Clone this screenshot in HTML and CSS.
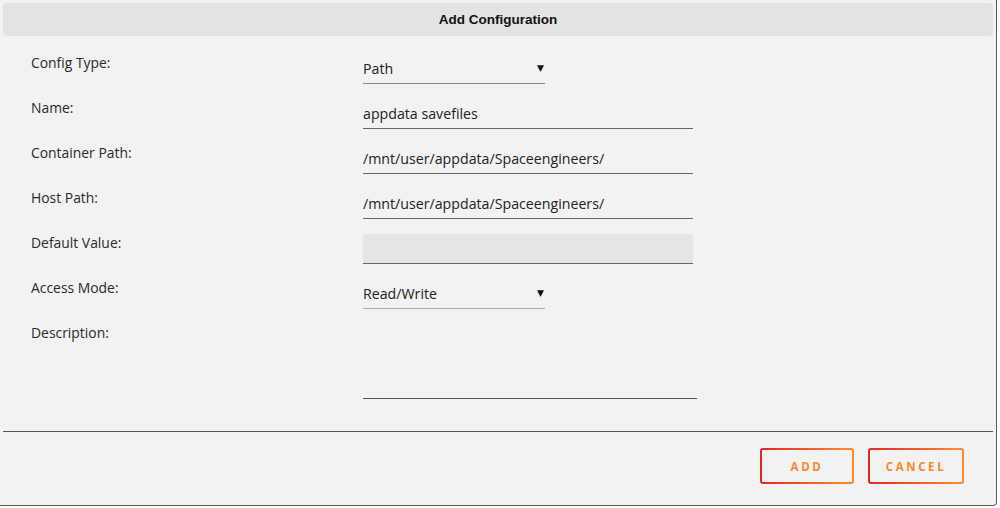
FILE: index.html
```html
<!DOCTYPE html>
<html lang="en">
<head>
    <meta charset="UTF-8">
    <title>Add Configuration</title>
    <link rel="stylesheet" href="styles.css">
</head>
<body>
    <div class="dialog">
        <div class="dialog-header">Add Configuration</div>

        <form class="config-form">
            <label class="field-label">Config Type:</label>
            <div class="select-wrap">
                <div class="field select">Path</div>
            </div>

            <label class="field-label">Name:</label>
            <div class="field text">appdata savefiles</div>

            <label class="field-label">Container Path:</label>
            <div class="field text">/mnt/user/appdata/Spaceengineers/</div>

            <label class="field-label">Host Path:</label>
            <div class="field text">/mnt/user/appdata/Spaceengineers/</div>

            <label class="field-label">Default Value:</label>
            <div class="field text disabled"></div>

            <label class="field-label">Access Mode:</label>
            <div class="select-wrap">
                <div class="field select light">Read/Write</div>
            </div>

            <label class="field-label">Description:</label>
            <div class="field textarea"></div>
        </form>

        <div class="dialog-footer">
            <button type="button" class="action-button">Add</button>
            <button type="button" class="action-button">Cancel</button>
        </div>
    </div>
</body>
</html>
```

FILE: styles.css
```css
* {
    margin: 0;
    padding: 0;
    box-sizing: border-box;
}

body {
    background: white;
    font-family: 'Open Sans', sans-serif;
    color: #222;
    height: 508px;
    overflow: hidden;
}

.dialog {
    width: 997px;
    height: 506px;
    padding: 3px 3px 0 3px;
    background: #f2f2f2;
    border-right: 1px solid #5a5a5a;
    border-bottom: 1px solid #5a5a5a;
    border-bottom-right-radius: 4px;
}

.dialog-header {
    height: 33px;
    background: #e3e3e3;
    border-radius: 4px;
    text-align: center;
    line-height: 34px;
    font-family: 'Liberation Sans', sans-serif;
    font-weight: 700;
    font-size: 13.5px;
    color: #111;
}

.config-form {
    display: grid;
    grid-template-columns: 332px 334px;
    grid-template-rows: repeat(6, 45px) auto;
    padding: 17px 0 0 28px;
}

.field-label {
    font-size: 13.9px;
    line-height: 20px;
    color: #2a2a2a;
}

.field {
    margin-top: 1px;
    height: 30px;
    font-size: 14.2px;
    line-height: 29px;
    border-bottom: 1px solid #666;
}

.field.text {
    width: 330px;
}

.field.disabled {
    background: #e6e6e6;
}

.select-wrap {
    position: relative;
    width: 182px;
}

.field.select {
    border-bottom-color: #888;
}

.field.select.light {
    border-bottom-color: #a8a8a8;
}

.select-wrap::after {
    content: "\25BC";
    position: absolute;
    right: 1px;
    top: 10px;
    font-family: 'DejaVu Sans', sans-serif;
    font-size: 9px;
    color: #111;
}

.field.textarea {
    width: 334px;
    height: 75px;
    border-bottom: 1px solid #555;
}

.dialog-footer {
    margin-top: 32px;
    border-top: 1px solid #555;
    display: flex;
    justify-content: flex-end;
    gap: 14px;
    padding: 16px 29px 0 0;
}

.action-button {
    height: 36px;
    width: 94px;
    border: 2px solid transparent;
    border-radius: 3px;
    background: linear-gradient(#f2f2f2, #f2f2f2) padding-box,
                linear-gradient(90deg, #e3262a, #ff8c2a) border-box;
    color: #f98a2c;
    font-family: 'Open Sans', sans-serif;
    font-size: 11.5px;
    font-weight: 700;
    letter-spacing: 2.6px;
    text-transform: uppercase;
    cursor: pointer;
}

.action-button + .action-button {
    width: 96px;
}
```
